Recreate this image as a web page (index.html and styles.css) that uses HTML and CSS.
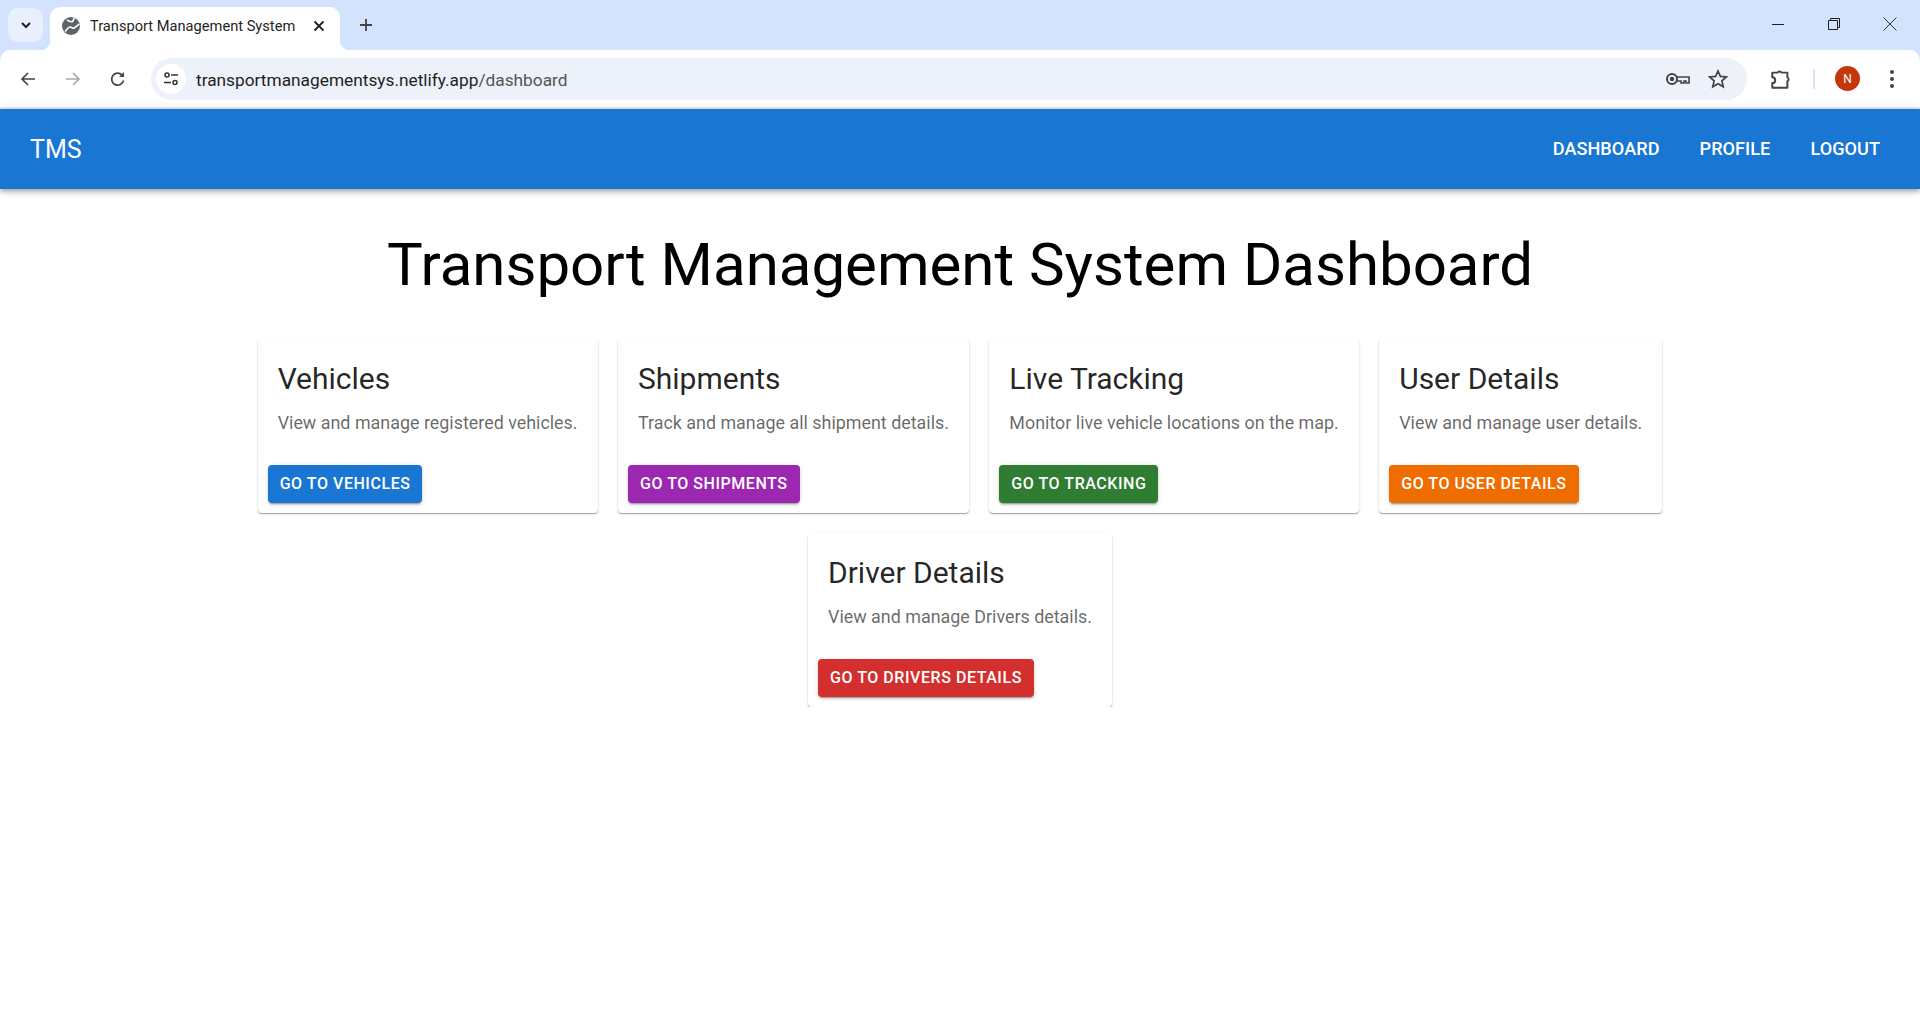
FILE: index.html
```html
<!DOCTYPE html>
<html lang="en">
<head>
    <meta charset="UTF-8">
    <title>Transport Management System</title>
    <link rel="stylesheet" href="styles.css">
</head>
<body>
    <div class="chrome">
        <div class="tabstrip">
            <div class="tab-search">
                <svg width="16" height="16" viewBox="0 0 16 16"><path d="M4 6l4 4 4-4" fill="none" stroke="#1f1f1f" stroke-width="2"/></svg>
            </div>
            <div class="tab">
                <svg class="favicon" width="18" height="18" viewBox="0 0 18 18"><circle cx="9" cy="9" r="9" fill="#5f6368"/><path d="M3 14.500c2-2 3-4.500 5-4.500s2 2 4 1 4-3 5.500-4M5 3c2 1 4 2.500 5.500 1.500S11 2 12.500 1" fill="none" stroke="#fff" stroke-width="1.600"/></svg>
                <span class="tab-title">Transport Management System</span>
                <svg class="tab-close" width="12" height="12" viewBox="0 0 12 12"><path d="M1.500 1.500l9 9M10.500 1.500l-9 9" stroke="#1f1f1f" stroke-width="1.800"/></svg>
            </div>
            <svg class="new-tab" width="14" height="14" viewBox="0 0 14 14"><path d="M7 1v12M1 7h12" stroke="#444" stroke-width="1.800"/></svg>
            <div class="window-btns">
                <svg width="14" height="14" viewBox="0 0 14 14"><path d="M1 7.500h12" stroke="#1f1f1f" stroke-width="1"/></svg>
                <svg width="14" height="14" viewBox="0 0 14 14"><path d="M1.500 3.500h9v9h-9zM3.500 3.500v-2h9v9h-2" fill="none" stroke="#1f1f1f" stroke-width="1"/></svg>
                <svg width="14" height="14" viewBox="0 0 14 14"><path d="M.5.5l13 13M13.500.5l-13 13" stroke="#333" stroke-width="1"/></svg>
            </div>
        </div>
        <div class="toolbar">
            <svg class="nav-icon" width="16" height="16" viewBox="0 0 16 16"><path d="M15 8H2M8 2L2 8l6 6" fill="none" stroke="#444" stroke-width="1.700"/></svg>
            <svg class="nav-icon" width="16" height="16" viewBox="0 0 16 16"><path d="M1 8h13M8 2l6 6-6 6" fill="none" stroke="#aaa" stroke-width="1.700"/></svg>
            <svg class="nav-icon" width="16" height="16" viewBox="0 0 16 16"><path d="M13.500 9.500A6 6 0 1 1 12 4" fill="none" stroke="#444" stroke-width="1.700"/><path d="M14 1v5H9z" fill="#444"/></svg>
            <div class="omnibox">
                <div class="site-info">
                    <svg width="16" height="16" viewBox="0 0 16 16"><circle cx="4" cy="4" r="2" fill="none" stroke="#333" stroke-width="1.500"/><path d="M8 4h7M1 11.500h7" stroke="#333" stroke-width="1.500"/><circle cx="12" cy="11.500" r="2" fill="none" stroke="#333" stroke-width="1.500"/></svg>
                </div>
                <div class="url">transportmanagementsys.netlify.app<span class="url-path">/dashboard</span></div>
                <svg class="omni-key" width="24" height="14" viewBox="0 0 24 14"><circle cx="6" cy="7" r="5" fill="none" stroke="#444" stroke-width="2"/><circle cx="6" cy="7" r="2.200" fill="#444"/><path d="M11 5h12v6h-3V9h-2v2h-3V9h-4" fill="none" stroke="#444" stroke-width="1.600"/></svg>
                <svg class="omni-star" width="20" height="20" viewBox="0 0 20 20"><path d="M10 2l2.400 5.400 5.900.6-4.400 3.900 1.300 5.800L10 14.700l-5.200 3 1.300-5.800L1.700 8l5.900-.6z" fill="none" stroke="#444" stroke-width="1.700"/></svg>
            </div>
            <svg class="ext-icon" width="22" height="22" viewBox="1 1 19 19"><path d="M3 5h4.500a2 2 0 0 1 3.500 0h5v4a2 2 0 0 1 0 3.500V18H3v-4a2.500 2.500 0 0 0 0-5z" fill="none" stroke="#444" stroke-width="1.700" stroke-linejoin="round"/></svg>
            <div class="tool-divider"></div>
            <div class="avatar">N</div>
            <svg class="menu-dots" width="6" height="20" viewBox="0 0 6 20"><circle cx="3" cy="3" r="2" fill="#444"/><circle cx="3" cy="10" r="2" fill="#444"/><circle cx="3" cy="17" r="2" fill="#444"/></svg>
        </div>
    </div>

    <header class="appbar">
        <div class="brand">TMS</div>
        <nav class="appbar-nav">
            <a>Dashboard</a>
            <a>Profile</a>
            <a>Logout</a>
        </nav>
    </header>

    <main class="contenido">
        <h1>Transport Management System Dashboard</h1>
        <div class="cards">
            <div class="card">
                <h2>Vehicles</h2>
                <p>View and manage registered vehicles.</p>
                <button class="btn azul">Go to Vehicles</button>
            </div>
            <div class="card">
                <h2>Shipments</h2>
                <p>Track and manage all shipment details.</p>
                <button class="btn morado">Go to Shipments</button>
            </div>
            <div class="card">
                <h2>Live Tracking</h2>
                <p>Monitor live vehicle locations on the map.</p>
                <button class="btn verde">Go to Tracking</button>
            </div>
            <div class="card">
                <h2>User Details</h2>
                <p>View and manage user details.</p>
                <button class="btn naranja">Go to User Details</button>
            </div>
            <div class="card">
                <h2>Driver Details</h2>
                <p>View and manage Drivers details.</p>
                <button class="btn rojo">Go to Drivers Details</button>
            </div>
        </div>
    </main>
</body>
</html>
```

FILE: styles.css
```css
body {
    margin: 0;
    background-color: white;
    font-family: Roboto, "Liberation Sans", sans-serif;
    color: black;
}
.chrome {
    background-color: #d3e3fd;
    height: 109px;
}
.tabstrip {
    height: 50px;
    display: flex;
    align-items: flex-start;
}
.tab-search {
    width: 35px;
    height: 34px;
    margin: 8px 7px 0 8px;
    border-radius: 10px;
    background-color: #e9f0fd;
    display: flex;
    justify-content: center;
    align-items: center;
}
.tab {
    position: relative;
    width: 290px;
    height: 43px;
    margin-top: 7px;
    padding: 0 15px 0 12px;
    box-sizing: border-box;
    background-color: white;
    border-radius: 10px 10px 0 0;
    display: flex;
    align-items: center;
}
.tab::before,
.tab::after {
    content: "";
    position: absolute;
    bottom: 0;
    width: 10px;
    height: 10px;
}
.tab::before {
    left: -10px;
    background: radial-gradient(circle at 0 0, transparent 10px, white 10.500px);
}
.tab::after {
    right: -10px;
    background: radial-gradient(circle at 100% 0, transparent 10px, white 10.500px);
}
.favicon {
    margin-right: 10px;
    margin-top: -6px;
}
.tab-title {
    flex: 1;
    font-size: 14.650px;
    color: #1f1f1f;
    margin-top: -6px;
}
.tab-close {
    margin-top: -6px;
}
.new-tab {
    margin: 18px 0 0 19px;
}
.window-btns {
    margin-left: auto;
    margin-right: 23px;
    display: flex;
    gap: 42px;
    padding-top: 17px;
}
.toolbar {
    height: 57px;
    background-color: white;
    border-radius: 10px 10px 0 0;
    border-bottom: 2px solid #e6e6e6;
    display: flex;
    align-items: center;
}
.nav-icon {
    margin-left: 20px;
    margin-right: 13px;
}
.nav-icon + .nav-icon {
    margin-left: 16px;
}
.omnibox {
    width: 1596px;
    height: 42px;
    margin-left: 12px;
    border-radius: 21px;
    background-color: #ecf1fa;
    display: flex;
    align-items: center;
}
.site-info {
    width: 30px;
    height: 30px;
    margin-left: 5px;
    border-radius: 50%;
    background-color: white;
    display: flex;
    justify-content: center;
    align-items: center;
}
.url {
    flex: 1;
    margin: 2px 0 0 10px;
    font-size: 17.300px;
    color: #1f1f1f;
}
.url-path {
    color: #555;
}
.omni-key {
    margin-right: 18px;
}
.omni-star {
    margin-right: 19px;
}
.ext-icon {
    margin-left: 23px;
}
.tool-divider {
    width: 2px;
    height: 20px;
    margin-left: 21px;
    background-color: #d3e3fd;
}
.avatar {
    width: 25px;
    height: 25px;
    margin-left: 20px;
    border-radius: 50%;
    background-color: #c5360b;
    color: white;
    font-size: 12px;
    display: flex;
    justify-content: center;
    align-items: center;
}
.menu-dots {
    margin-left: 29px;
}
.appbar {
    height: 80px;
    padding: 0 40px 0 30px;
    background-color: #1976d2;
    color: white;
    display: flex;
    justify-content: space-between;
    align-items: center;
    box-shadow: 0 2px 4px -1px rgba(0,0,0,0.2), 0 4px 5px 0 rgba(0,0,0,0.14), 0 1px 10px 0 rgba(0,0,0,0.12);
}
.brand {
    font-size: 25px;
}
.appbar-nav {
    display: flex;
    gap: 40px;
    padding-bottom: 2px;
}
.appbar-nav a {
    font-size: 18.100px;
    font-weight: 500;
    letter-spacing: 0.05px;
    text-transform: uppercase;
}
.contenido {
    display: flex;
    flex-direction: column;
    align-items: center;
}
h1 {
    margin: 41px 0 39px;
    font-size: 60px;
    font-weight: 400;
    line-height: 1.167;
}
.cards {
    width: 1500px;
    display: flex;
    flex-wrap: wrap;
    justify-content: center;
    gap: 20px 20.400px;
}
.card {
    padding: 22px 20px 10px;
    border-radius: 4px;
    background-color: white;
    box-shadow: 0 1px 1px rgba(0,0,0,0.3), 0 1px 3px rgba(0,0,0,0.12);
}
.card h2 {
    margin: 0 0 12px;
    font-size: 30px;
    font-weight: 400;
    line-height: 1.2;
    color: rgba(0,0,0,0.87);
}
.card p {
    margin: 0 0 29px;
    font-size: 17.900px;
    line-height: 27px;
    color: rgba(0,0,0,0.6);
}
.btn {
    display: block;
    height: 38px;
    margin-left: -10px;
    padding: 0 12px 2px;
    border: none;
    border-radius: 4px;
    color: white;
    font-family: inherit;
    font-size: 16px;
    font-weight: 500;
    letter-spacing: 0.55px;
    text-transform: uppercase;
    box-shadow: 0 3px 1px -2px rgba(0,0,0,0.2), 0 2px 2px 0 rgba(0,0,0,0.14), 0 1px 5px 0 rgba(0,0,0,0.12);
}
.azul { background-color: #1976d2; }
.morado { background-color: #9c27b0; }
.verde { background-color: #2e7d32; }
.naranja { background-color: #ef6c00; }
.rojo { background-color: #d32f2f; }
```
